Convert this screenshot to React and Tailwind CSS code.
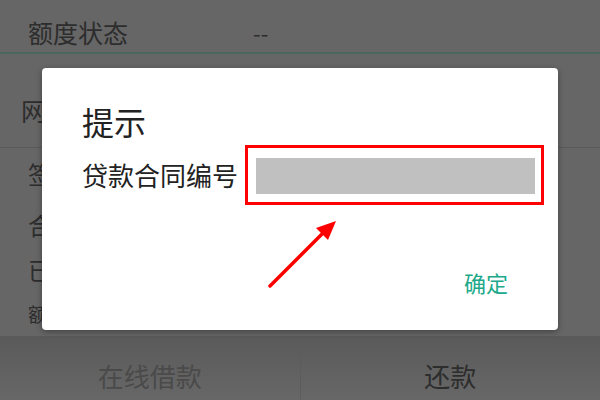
import React from "react";

const font = { fontFamily: '"Noto Sans CJK SC", "Noto Sans", sans-serif' };

const rows = [
  { label: "签约日期", h: "h-[52px]", size: "text-[24px]" },
  { label: "合同金额", h: "h-[50px]", size: "text-[24px]" },
  { label: "已还金额", h: "h-[40px]", size: "text-[24px]" },
  { label: "额度有效期", h: "h-[46px]", size: "text-[19px]" },
];

const App = () => {
  return (
    <div
      className="relative w-[600px] h-[400px] overflow-hidden bg-[#666666] text-[#2d2d2d]"
      style={font}
    >
      {/* page behind the dialog */}
      <div className="h-[52px] flex items-center pt-[12px] pl-[28px] text-[25px] leading-none">
        <span className="w-[225px]">额度状态</span>
        <span className="text-[22px]">--</span>
      </div>
      <div className="h-[2px] bg-[#48675f]" />
      <div className="h-[94px] flex items-center pt-[20px] pl-[21px] text-[25px] leading-none border-b border-[#5a5a5a]">
        网点信息
      </div>
      <div className="border-b border-[#5a5a5a]">
        {rows.map((row) => (
          <div
            key={row.label}
            className={`${row.h} flex items-center pl-[28px] ${row.size} leading-none`}
          >
            {row.label}
          </div>
        ))}
      </div>
      <div className="h-[62px] flex bg-gradient-to-b from-[#5a5a5a] to-[#676767]">
        <div className="flex-1 flex items-center justify-center pt-[16px] text-[26px] leading-none text-[#4a4a4a] border-r border-[#5c5c5c]">
          在线借款
        </div>
        <div className="flex-1 flex items-center justify-center pt-[16px] text-[26px] leading-none text-[#2d2d2d]">
          还款
        </div>
      </div>

      {/* dialog */}
      <div className="absolute left-[42px] top-[68px] w-[516px] h-[262px] bg-white rounded-[4px] shadow-[0_2px_6px_rgba(0,0,0,0.35)] pt-[34px] pl-[40px] pr-[14px] text-[#222]">
        <div className="text-[32px] leading-[38px]">提示</div>
        <div className="mt-[5px] flex items-center">
          <span className="shrink-0 whitespace-nowrap text-[26px] leading-none w-[163px]">贷款合同编号</span>
          <div className="shrink-0 w-[299px] h-[60px] border-[3px] border-[#ff0000] pl-[8px] pr-[6px] pt-[10px] pb-[8px] flex">
            <div className="flex-1 bg-[#c0c0c0]" />
          </div>
        </div>
        <div className="mt-[61px] pr-[36px] flex justify-end">
          <button className="text-[22px] leading-[33px] text-[#20a88a]">确定</button>
        </div>
      </div>

      {/* annotation arrow */}
      <svg
        className="absolute left-0 top-0 pointer-events-none"
        width="600"
        height="400"
        viewBox="0 0 600 400"
      >
        <line x1="270" y1="286" x2="324" y2="232" stroke="#ff0000" strokeWidth="3.5" strokeLinecap="round" />
        <polygon points="336,221 316,228 328,240" fill="#ff0000" />
      </svg>
    </div>
  );
};

export default App;
